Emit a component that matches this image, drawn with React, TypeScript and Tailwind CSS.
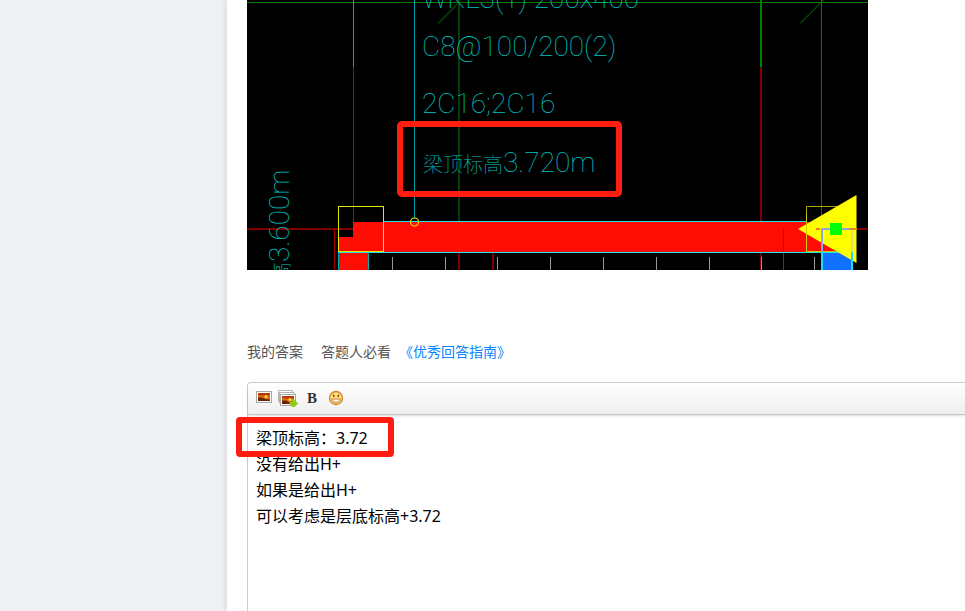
const ticks = [145, 198, 250, 303, 356, 409, 462, 514, 567];

const answer = ['梁顶标高：3.72', '没有给出H+', '如果是给出H+', '可以考虑是层底标高+3.72'].join('\n');

function BeamDrawing() {
  return (
    <svg
      viewBox="0 0 621 270"
      className="block w-[621px] max-w-full overflow-hidden bg-black"
      role="img"
      aria-label="梁顶标高3.720m"
    >
      {/* axes */}
      <g shapeRendering="crispEdges">
        <path d="M212 0V229" stroke="#004000" strokeWidth="2" />
        <path d="M0 2.5H621" stroke="#008000" />
        <path d="M106.5 0V67" stroke="#10c010" />
        <path d="M106.5 67V222" stroke="#c00000" />
        <path d="M514 0V67" stroke="#008000" strokeWidth="2" />
        <path d="M514 67V221" stroke="#800000" strokeWidth="2" />
        <path d="M574.5 0V229" stroke="#008000" />
        <path d="M0 229H621" stroke="#800000" strokeWidth="2" />
        <path d="M87.5 229V270" stroke="#a00000" />
        <path d="M167.5 0V218" stroke="#00a0a8" />
      </g>
      <path d="M191 23.500L213 1.500" stroke="#004800" strokeWidth="1.500" />
      <path d="M553 23.500L577 -.5" stroke="#008000" />

      {/* notes */}
      <g
        fill="#00c4c4"
        className="font-['Roboto','Noto_Sans_CJK_SC',sans-serif] text-[28px] font-thin"
      >
        <text x="175" y="8">WKL3(1) 200x400</text>
        <text x="175" y="56">C8@100/200(2)</text>
        <text x="175" y="113">2C16;2C16</text>
        <text x="176" y="172">
          <tspan className="text-[20px]">梁顶标高</tspan>3.720m
        </text>
        <text transform="translate(42 282) rotate(-90)">
          <tspan className="text-[20px]">高</tspan>3.600m
        </text>
      </g>

      {/* beam and columns */}
      <g shapeRendering="crispEdges">
        <path d="M106 222H604V252H121V270H91V237H106Z" fill="#ff0d04" />
        <path d="M514 252V270M212 252V270M246 252V270" stroke="#800000" strokeWidth="2" />
        <path d="M536.5 229V270" stroke="#d00000" />
        <path d="M136 221.5H560M91 252.500H604" stroke="#20e8e8" />
        <path d="M91.500 252V270M121.500 252V270" stroke="#00b0b0" />
        <path d="M91.500 206.500H136.500V251.500H91.500Z" fill="none" stroke="#e6e600" />
        {ticks.map((x) => (
          <path key={x} d={`M${x + 0.5} 257V270`} stroke="#969696" />
        ))}
        <path d="M574 253H604V270H574Z" fill="#1070ff" />
      </g>
      <circle cx="167.500" cy="222" r="4" fill="none" stroke="#f0f000" strokeWidth="1.200" />

      {/* support marker */}
      <path d="M559.500 206.500H604V251.500H559.500Z" fill="none" stroke="#a8a800" />
      <path d="M551 229L609.500 195V263Z" fill="#ffff00" />
      <path d="M559.500 213V251.500H588" fill="none" stroke="#d0c800" />
      <path d="M575 252V229H605V252" fill="none" stroke="#88a8e8" strokeWidth="2" />
      <path d="M605 230V252" stroke="#d8e070" strokeWidth="2" />
      <path d="M575 252V270M605 252V270" stroke="#20d8f8" strokeWidth="2" />
      <path d="M569 229H573M602 229H609" stroke="#f08018" strokeWidth="2" />
      <path d="M583 223H595V235H583Z" fill="#00ff00" />

      <rect x="153" y="124" width="219" height="70" rx="2" fill="none" stroke="#ff1d12" strokeWidth="6" />
    </svg>
  );
}

function Sunset({ x, y }: { x: number; y: number }) {
  return (
    <g>
      <rect x={x} y={y} width="15" height="11" fill="#fff" stroke="#a8a8a8" />
      <rect x={x + 1.5} y={y + 1.5} width="12" height="8" fill="#e26d12" />
      <path d={`M${x + 1.5} ${y + 1.5}h12v2l-5 1-7-1z`} fill="#b53c08" />
      <circle cx={x + 9.5} cy={y + 5} r="1.500" fill="#ffd34a" />
      <path d={`M${x + 1.5} ${y + 6}l4 0 3 1.500 5 .5v1.500H${x + 1.5}z`} fill="#6b2405" />
    </g>
  );
}

function ImageIcon() {
  return (
    <svg width="16" height="16" viewBox="0 0 16 16" aria-hidden="true">
      <Sunset x={0.5} y={1.5} />
    </svg>
  );
}

function ImagesIcon() {
  return (
    <svg width="20" height="18" viewBox="0 0 20 18" aria-hidden="true">
      <path d="M.5 1.500H14.500V12.500H.5Z" fill="#fff" stroke="#b4b4b4" />
      <path d="M1.500 3.500H16V14H1.500Z" fill="#fff" stroke="#b4b4b4" />
      <Sunset x={2.5} y={5.5} />
      <path d="M14 10.500h3v2.500h2.500v3H17V18h-3v-2h-2.500v-3H14Z" fill="#8fcc18" />
    </svg>
  );
}

function SmileIcon() {
  return (
    <svg width="16" height="16" viewBox="0 0 16 16" aria-hidden="true">
      <circle cx="8" cy="8" r="6.500" fill="#ffdf75" stroke="#cf812c" strokeWidth="1.300" />
      <ellipse cx="5.700" cy="5.800" rx=".9" ry="1.300" fill="#8a4510" />
      <ellipse cx="10.300" cy="5.800" rx=".9" ry="1.300" fill="#8a4510" />
      <path d="M3.800 9H12.200Q11.500 12.500 8 12.500T3.800 9Z" fill="#fff" stroke="#b8702c" strokeWidth=".9" />
    </svg>
  );
}

export default function App() {
  return (
    <div className="flex min-h-screen overflow-hidden bg-[#eff0f3] font-['Noto_Sans','Noto_Sans_CJK_SC',sans-serif]">
      <aside className="w-[227px] shrink-0" />
      <main className="flex min-w-0 flex-1 flex-col bg-white pl-5 shadow-[0_0_6px_rgba(0,0,0,0.15)]">
        <BeamDrawing />

        <div className="mt-[72px] flex items-center text-sm leading-5 text-[#555]">
          <label htmlFor="answer">我的答案</label>
          <span className="ml-[18px]">答题人必看</span>
          <a href="#guide" className="ml-2 text-[#0a84ff]">《优秀回答指南》</a>
        </div>

        <div className="mt-5 flex flex-1 flex-col rounded-tl border-t border-l border-[#ccc]">
          <div className="flex h-8 items-center rounded-tl border-b border-[#c4c4c4] bg-linear-to-b from-white to-[#efefef] pb-px pl-2 shadow-sm">
            <button type="button" aria-label="图片" className="mr-1.5">
              <ImageIcon />
            </button>
            <button type="button" aria-label="多图上传" className="mr-1.5">
              <ImagesIcon />
            </button>
            <button
              type="button"
              aria-label="加粗"
              className="mr-2 w-4 text-center font-['Liberation_Serif',serif] text-[15px] leading-4 font-bold text-[#333]"
            >
              B
            </button>
            <button type="button" aria-label="表情">
              <SmileIcon />
            </button>
          </div>
          <div className="relative flex flex-1">
            <textarea
              id="answer"
              defaultValue={answer}
              className="w-full flex-1 resize-none bg-transparent px-2 pt-2.5 text-base leading-[26px] text-black outline-none"
            />
            <div className="pointer-events-none absolute top-0.5 -left-3 h-10 w-[158px] rounded-sm border-6 border-[#ff1d12]" />
          </div>
        </div>
      </main>
    </div>
  );
}
